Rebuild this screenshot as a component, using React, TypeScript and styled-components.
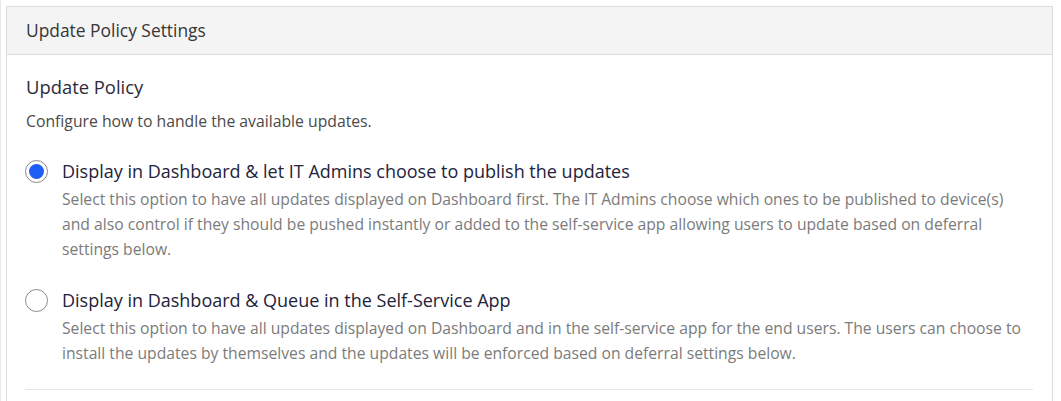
import React from "react";
import styled, { createGlobalStyle } from "styled-components";

const Global = createGlobalStyle`
  html, body { margin: 0; padding: 0; background: #ffffff; }
  body { font-family: "Open Sans", "Noto Sans", sans-serif; }
`;

const Page = styled.div`
  height: 401px;
  box-sizing: border-box;
  padding: 6px 8px 0 5px;
  border-left: 1px solid #e8e8e8;
  overflow: hidden;
`;

const Card = styled.section`
  border: 1px solid #dcdcdc;
  border-bottom: none;
  background: #fff;
  height: 100%;
  box-sizing: border-box;
`;

const Header = styled.div`
  height: 48px;
  box-sizing: border-box;
  background: #f4f4f4;
  border-bottom: 1px solid #dcdcdc;
  display: flex;
  align-items: center;
  padding: 0 19px 2px 19px;
  font-size: 17.4px;
  color: #363636;
`;

const Body = styled.div`
  padding: 19px 19px 0 19px;
`;

const Heading = styled.h3`
  margin: 0;
  font-size: 18.4px;
  font-weight: 400;
  color: #2b2b3a;
  line-height: 26px;
`;

const Intro = styled.p`
  margin: 10px 0 0 0;
  font-size: 15.75px;
  line-height: 22px;
  color: #4a4a4a;
`;

const Options = styled.div`
  display: flex;
  flex-direction: column;
  gap: 25px;
  margin-top: 26px;
`;

const Option = styled.label`
  display: grid;
  grid-template-columns: 24px 962px;
  column-gap: 12px;
  cursor: pointer;
`;

const Radio = styled.span<{ $checked?: boolean }>`
  width: 23px;
  height: 23px;
  box-sizing: border-box;
  border-radius: 50%;
  border: 1px solid #8a8a8a;
  display: flex;
  align-items: center;
  justify-content: center;
  margin-top: 2px;
  margin-left: -1px;
  background: #fff;
  &::after {
    content: "";
    width: 15px;
    height: 15px;
    border-radius: 50%;
    background: ${(p) => (p.$checked ? "#1f5ef5" : "transparent")};
  }
`;

const Label = styled.div`
  font-size: 18px;
  line-height: 26px;
  color: #23233b;
`;

const Desc = styled.div`
  grid-column: 2;
  font-size: 15.7px;
  line-height: 25px;
  color: #7b7b7b;
  margin-top: 3px;
`;

const Divider = styled.hr`
  border: none;
  border-top: 1px solid #e6e6e6;
  margin: 23px 0 0 -1px;
`;

export default function App() {
  return (
    <>
      <Global />
      <Page>
        <Card>
          <Header>Update Policy Settings</Header>
          <Body>
            <Heading>Update Policy</Heading>
            <Intro>Configure how to handle the available updates.</Intro>
            <Options>
              <Option>
                <Radio $checked />
                <Label>Display in Dashboard &amp; let IT Admins choose to publish the updates</Label>
                <Desc>
                  Select this option to have all updates displayed on Dashboard first. The IT Admins choose which ones to be published to device(s) and also control if they should be pushed instantly or added to the self-service app allowing users to update based on deferral settings below.
                </Desc>
              </Option>
              <Option>
                <Radio />
                <Label>Display in Dashboard &amp; Queue in the Self-Service App</Label>
                <Desc>
                  Select this option to have all updates displayed on Dashboard and in the self-service app for the end users. The users can choose to install the updates by themselves and the updates will be enforced based on deferral settings below.
                </Desc>
              </Option>
            </Options>
            <Divider />
          </Body>
        </Card>
      </Page>
    </>
  );
}
